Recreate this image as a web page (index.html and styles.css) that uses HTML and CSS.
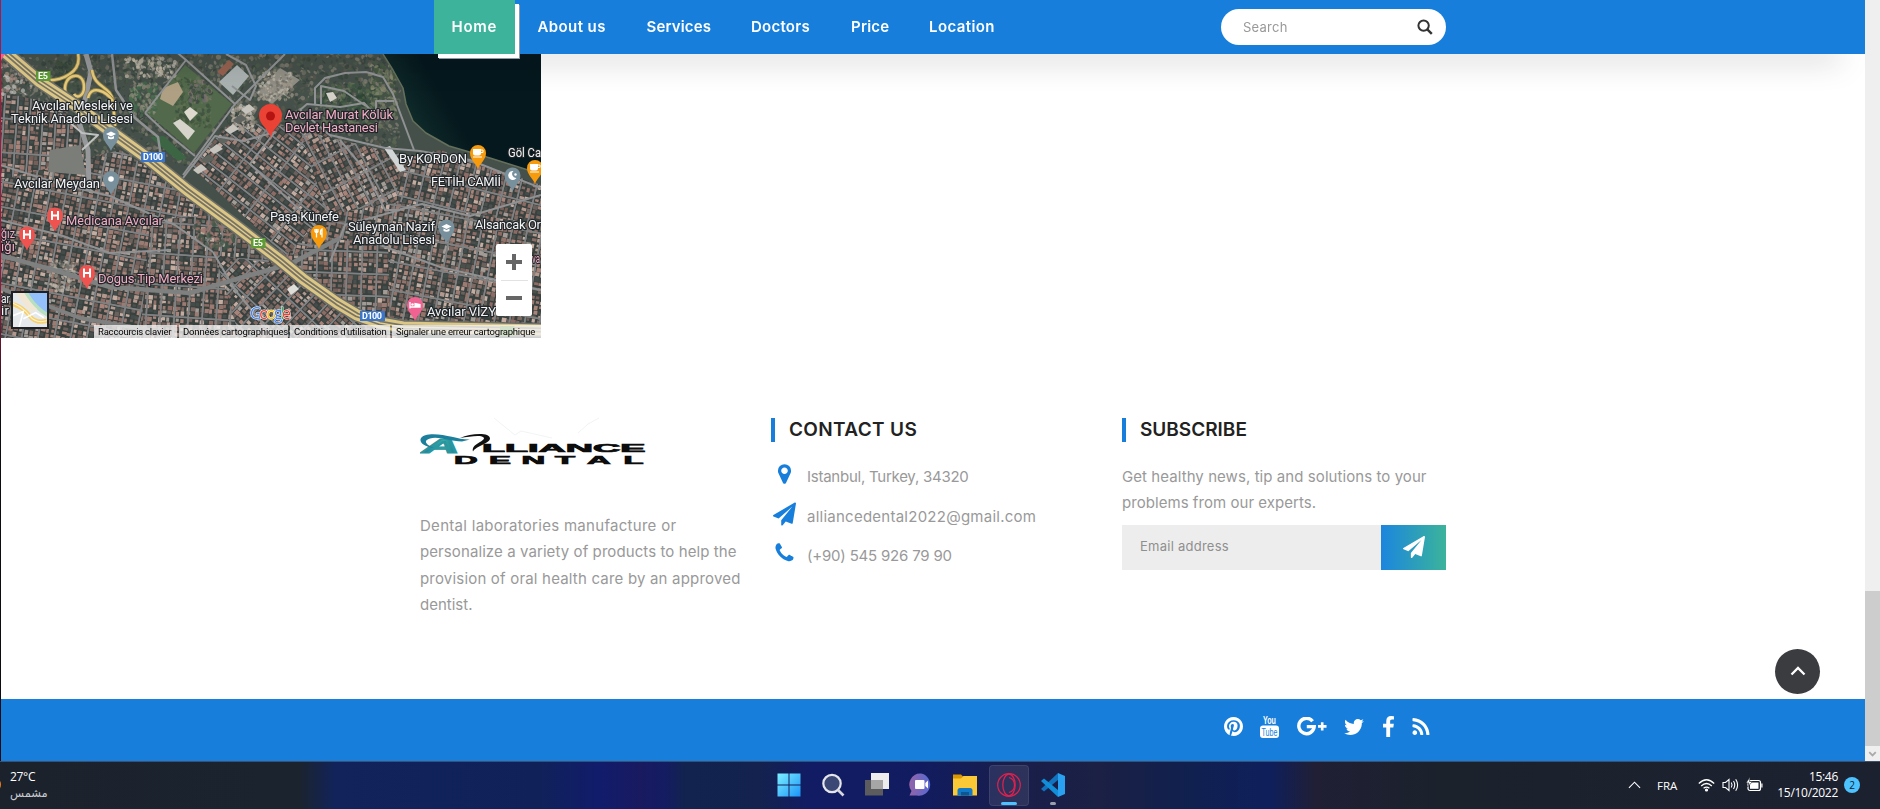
FILE: index.html
```html
<!DOCTYPE html>
<html lang="en">
<head>
<meta charset="utf-8">
<title>Alliance Dental</title>
<link rel="stylesheet" href="styles.css">
</head>
<body>
<div class="screen">
  <div class="browser">
    <div class="window-edge"></div>
    <div class="page">
      <header class="header">
        <nav class="nav">
          <a class="nav-link active n-home">Home</a>
          <a class="nav-link n-about">About us</a>
          <a class="nav-link n-services">Services</a>
          <a class="nav-link n-doctors">Doctors</a>
          <a class="nav-link n-price">Price</a>
          <a class="nav-link n-location">Location</a>
        </nav>
        <div class="search">
          <span class="search-label">Search</span>
          <svg class="search-icon" viewBox="0 0 16 16"><circle cx="6.6" cy="6.6" r="5.2" fill="none" stroke="#333" stroke-width="2"/><path d="M10.3 10.3 14.8 14.9" stroke="#333" stroke-width="2.4"/></svg>
        </div>
      </header>

      <section class="map">
        <canvas class="map-terrain" id="terrain" width="540" height="284"></canvas>
        <svg class="map-labels" viewBox="1 54 540 284">
          <defs>
            <path id="pin" d="M0 0C-2-6-8-9-8-16A8 8 0 0 1 8-16C8-9 2-6 0 0Z"/>
            <g id="cap"><path d="M-5-17 0-19.5 5-17 0-14.5Z" fill="#fff"/><path d="M-3-15V-12.5Q0-11 3-12.5V-15L0-13.4Z" fill="#fff"/></g>
            <g id="cup" fill="#fff"><path d="M-5-20H3V-15.500Q3-13.500 1-13.500H-3Q-5-13.500-5-15.500Z"/><path d="M3-19H5V-16.500H3" fill="none" stroke="#fff"/><path d="M-5-12.500H4V-11.500H-5Z"/></g>
            <g id="hosp" stroke="#fff" stroke-width="2"><path d="M-3-20.500V-11.500M3-20.500V-11.500M-3-16H3"/></g>
          </defs>
          <g class="badge">
            <rect x="36" y="71" width="14.500" height="10" fill="#5f9c35"/><text x="38" y="79.300" textLength="10">E5</text>
            <rect x="141" y="152" width="24" height="10" fill="#3a75c8"/><text x="143" y="160.300" textLength="20">D100</text>
            <rect x="251" y="238" width="14.500" height="10" fill="#5f9c35"/><text x="253" y="246.300" textLength="10">E5</text>
            <rect x="360" y="311" width="25" height="10" fill="#3a75c8"/><text x="362" y="319.300" textLength="20">D100</text>
            <rect x="500" y="326" width="14.500" height="10" fill="#5f9c35"/>
          </g>
          <g class="place">
            <text x="32" y="109.500" textLength="101">Avcılar Mesleki ve</text>
            <text x="11" y="122.500" textLength="122">Teknik Anadolu Lisesi</text>
            <text x="14" y="188" textLength="86">Avcılar Meydan</text>
            <text x="399" y="163" textLength="68">By KORDON</text>
            <text x="508" y="156.500" textLength="33" lengthAdjust="spacingAndGlyphs">Göl Ca</text>
            <text x="431" y="186" textLength="70">FETİH CAMİİ</text>
            <text x="270" y="221" textLength="69">Paşa Künefe</text>
            <text x="348" y="231" textLength="87">Süleyman Nazif</text>
            <text x="353" y="244" textLength="82">Anadolu Lisesi</text>
            <text x="475" y="229" textLength="66">Alsancak Or</text>
            <text x="427" y="316" textLength="69">Avcılar VİZY</text>
            <text x="1" y="303" textLength="9" lengthAdjust="spacingAndGlyphs">ar</text>
            <text x="1" y="315" textLength="8">ir</text>
          </g>
          <g class="place pink">
            <text x="285" y="119" textLength="108">Avcılar Murat Kölük</text>
            <text x="285" y="132" textLength="93">Devlet Hastanesi</text>
            <text x="66" y="225" textLength="97">Medicana Avcılar</text>
            <text x="98" y="283" textLength="105">Dogus Tip Merkezi</text>
            <text x="1" y="238" textLength="14" lengthAdjust="spacingAndGlyphs">ğız</text>
            <text x="1" y="251" textLength="14">ığı</text>
            <text x="532" y="263" textLength="8" lengthAdjust="spacingAndGlyphs">va</text>
          </g>
          <g transform="translate(1 61)"><use href="#pin" fill="#f06292"/></g>
          <g transform="translate(111 151)"><use href="#pin" fill="#78909c"/><use href="#cap"/></g>
          <g transform="translate(111 195)"><use href="#pin" fill="#78909c"/><circle cy="-16" r="2.800" fill="#fff"/></g>
          <g transform="translate(446.500 243.500)"><use href="#pin" fill="#78909c"/><use href="#cap"/></g>
          <g transform="translate(512.500 191.500)"><use href="#pin" fill="#78909c"/><path d="M1-20.500A4.500 4.500 0 1 0 4-13.500A4 4 0 0 1 1-20.500Z" fill="#fff"/><circle cx="3" cy="-17" r="1.200" fill="#fff"/></g>
          <g transform="translate(478 169)"><use href="#pin" fill="#f79a0b"/><use href="#cup"/></g>
          <g transform="translate(535 184)"><use href="#pin" fill="#f79a0b"/><use href="#cup"/></g>
          <g transform="translate(319 249)"><use href="#pin" fill="#f79a0b"/><path d="M-4-20V-17.500Q-2.500-15.500-1-17.500V-20M-2.500-20V-11.500M3-11.500V-20Q1-19 1.500-15H3" fill="none" stroke="#fff" stroke-width="1.300"/></g>
          <g transform="translate(55 231.500)"><use href="#pin" fill="#ef5350"/><use href="#hosp"/></g>
          <g transform="translate(27 250.500)"><use href="#pin" fill="#ef5350"/><use href="#hosp"/></g>
          <g transform="translate(87 289)"><use href="#pin" fill="#ef5350"/><use href="#hosp"/></g>
          <g transform="translate(415 321)"><use href="#pin" fill="#f06292"/><path d="M-5-19V-12.500M-5-14H5V-16.500L0-17.500V-14" stroke="#fff" fill="#fff" stroke-width="1.300"/><circle cx="-2.500" cy="-16.500" r="1.300" fill="#fff"/></g>
          <g transform="translate(270.500 138)"><path d="M0 0C-2-10-11.500-13-11.500-22.500A11.500 11.500 0 0 1 11.500-22.500C11.500-13 2-10 0 0Z" fill="#ea4335"/><circle cy="-22" r="4.500" fill="#b31412"/></g>
          <text class="google" x="250" y="319" textLength="41"><tspan fill="#4285f4">G</tspan><tspan fill="#ea4335">o</tspan><tspan fill="#fbbc04">o</tspan><tspan fill="#4285f4">g</tspan><tspan fill="#34a853">l</tspan><tspan fill="#ea4335">e</tspan></text>
        </svg>
        <svg class="map-thumb" viewBox="0 0 33 33"><rect width="33" height="33" fill="#e6e9ec"/><path d="M13 0H33V22Q24 17 20 10Z" fill="#94c0fb"/><path d="M10 0H15Q22 12 33 19V23Q20 16 10 0Z" fill="#b7dfc0"/><path d="M3 0H11Q17 10 24 16L17 18Q8 8 3 0Z" fill="#f1e7d3"/><path d="M0 11Q10 14 16 22T33 27" stroke="#f7cf6b" stroke-width="4" fill="none"/><path d="M0 10Q10 14 16 22T33 27" stroke="#fff4cf" fill="none"/><path d="M0 22 10 18 6 33M10 25 22 19 30 24" stroke="#fff" stroke-width="1.500" fill="none"/></svg>
        <div class="map-zoom"><span class="zoom-in"></span><span class="zoom-line"></span><span class="zoom-out"></span></div>
        <div class="map-legal">
          <span class="l1">Raccourcis clavier</span><span class="l2">Données cartographiques</span><span class="l3">Conditions d'utilisation</span><span class="l4">Signaler une erreur cartographique</span>
        </div>
      </section>

      <footer class="footer">
        <div class="about">
          <svg class="logo" viewBox="420 416 228 64">
            <defs><linearGradient id="teal"><stop offset="0" stop-color="#1c7f9c"/><stop offset=".6" stop-color="#36aaa4"/><stop offset="1" stop-color="#15758f"/></linearGradient></defs>
            <path d="M494 418 505 427 515 435 521 431 552 438M599 418 588 424 578 433" fill="none" stroke="#e9efef" stroke-width=".7"/>
            <text transform="translate(422 453.400) scale(2.600 1)" class="logo-a" fill="url(#teal)">A</text>
            <path d="M434 448C418 446 416 436 429 434.500C444 433 458 440 470 439.500L462 441.500C449 441.500 439 436 430 438.500C422 441 427 445 434 448Z" fill="#1c7f9c"/>
            <path d="M460 438C471 433 490 432 490 438.500C490 443 476 446 473 451.500C471 444 484 442 484 438C483 434.500 471 436 460 438Z" fill="#111"/>
            <text class="logo-word" transform="translate(482 452) scale(2.300 1)" textLength="71" lengthAdjust="spacingAndGlyphs">LLIANCE</text>
            <text class="logo-word" transform="translate(454 464) scale(2.850 1)" x="0 12.300 23.700 35.400 46.700 59.500">DENTAL</text>
          </svg>
          <p class="copy about-copy"><span class="a1">Dental laboratories manufacture or</span><br><span class="a2">personalize a variety of products to help the</span><br><span class="a3">provision of oral health care by an approved</span><br><span class="a4">dentist.</span></p>
        </div>
        <div class="contact">
          <h3 class="title t-contact">CONTACT US</h3>
          <div class="row"><svg class="fa" viewBox="0 0 1792 1792"><path d="M1152 640q0-106-75-181t-181-75-181 75-75 181 75 181 181 75 181-75 75-181zm256 0q0 109-33 179l-364 774q-16 33-47.500 52t-67.500 19-67.500-19-46.500-52l-365-774q-33-70-33-179 0-212 150-362t362-150 362 150 150 362z"/></svg><span class="copy c1">Istanbul, Turkey, 34320</span></div>
          <div class="row"><svg class="fa" viewBox="0 0 1792 1792"><path d="M1764 11q33 24 27 64l-256 1536q-5 29-32 45-14 8-31 8-11 0-24-5l-453-185-242 295q-18 23-49 23-13 0-22-4-19-7-30.500-23.500t-11.500-36.500v-349l864-1059-1069 925-395-162q-37-14-40-55-2-40 32-59l1664-960q15-9 32-9 20 0 36 11z"/></svg><span class="copy c2">alliancedental2022@gmail.com</span></div>
          <div class="row"><svg class="fa" viewBox="0 0 1792 1792"><path d="M1600 1240q0 27-10 70.500t-21 68.500q-21 50-122 106-94 51-186 51-27 0-53-3.500t-57.500-12.500-47-14.500-55.500-20.500-49-18q-98-35-175-83-127-79-264-216t-216-264q-48-77-83-175-3-9-18-49t-20.500-55.500-14.500-47-12.500-57.500-3.500-53q0-92 51-186 56-101 106-122 25-11 68.500-21t70.500-10q14 0 21 3 18 6 53 76 11 19 30 54t35 63.500 31 53.500q3 4 17.500 25t21.500 35.500 7 28.500q0 20-28.500 50t-62 55-62 53-28.500 46q0 9 5 22.500t8.500 20.500 14 24 11.500 19q76 137 174 235t235 174q2 1 19 11.500t24 14 20.500 8.500 22.500 5q18 0 46-28.500t53-62 55-62 50-28.500q14 0 28.500 7t35.500 21.500 25 17.500q25 15 53.500 31t63.500 35 54 30q70 35 76 53 3 7 3 21z"/></svg><span class="copy c3">(+90) 545 926 79 90</span></div>
        </div>
        <div class="subscribe">
          <h3 class="title t-sub">SUBSCRIBE</h3>
          <p class="copy sub-copy"><span class="s1">Get healthy news, tip and solutions to your</span><br><span class="s2">problems from our experts.</span></p>
          <div class="form"><span class="email">Email address</span><span class="send"><svg viewBox="0 0 1792 1792"><path d="M1764 11q33 24 27 64l-256 1536q-5 29-32 45-14 8-31 8-11 0-24-5l-453-185-242 295q-18 23-49 23-13 0-22-4-19-7-30.500-23.500t-11.500-36.500v-349l864-1059-1069 925-395-162q-37-14-40-55-2-40 32-59l1664-960q15-9 32-9 20 0 36 11z"/></svg></span></div>
        </div>
      </footer>

      <div class="social">
        <svg class="so-pin" viewBox="128 128 1536 1536"><path d="M1664 896q0 209-103 385.500t-279.500 279.500-385.500 103q-111 0-218-32 59-93 78-164 9-34 54-211 20 39 73 67.500t114 28.500q121 0 216-68.500t147-188.500 52-270q0-114-59.500-214t-172.500-163-255-63q-105 0-196 29t-154.500 77-109 110.500-67 129.500-21.500 134q0 104 40 183t117 111q30 12 38-20 2-7 8-31t8-30q6-23-11-43-51-61-51-151 0-151 104.500-259.500t273.500-108.500q151 0 235.500 82t84.500 213q0 170-68.500 289t-175.500 119q-61 0-98-43.500t-23-104.500q8-35 26.500-93.500t30-103 11.500-75.500q0-50-27-83t-77-33q-62 0-105 57t-43 142q0 73 25 122l-99 418q-17 70-13 177-206-91-333-281t-127-423q0-209 103-385.500t279.500-279.500 385.500-103 385.500 103 279.500 279.500 103 385.500z"/></svg>
        <svg class="so-yt" viewBox="0 0 19 23"><text x="3" y="9" textLength="13" lengthAdjust="spacingAndGlyphs" font-size="11.500" fill="#fff">You</text><rect y="10.500" width="19" height="12.500" rx="3"/><text x="1.500" y="21" textLength="16" lengthAdjust="spacingAndGlyphs" font-size="11" font-weight="normal" fill="#177fdb">Tube</text></svg>
        <svg class="so-gp" viewBox="0 0 30 19"><path d="M15.600 4.200A7.700 7.700 0 1 0 17.200 9.600H9.800" fill="none" stroke="#fff" stroke-width="3.400"/><path d="M25.200 5.300V13.500M21 9.400H29.500" stroke="#fff" stroke-width="2.600"/></svg>
        <svg class="so-tw" viewBox="108 256 1576 1280"><path d="M1684 408q-67 98-162 167 1 14 1 42 0 130-38 259.500t-115.500 248.500-184.500 210.500-258 146-323 54.500q-271 0-496-145 35 4 78 4 225 0 401-138-105-2-188-64.500t-114-159.500q33 5 61 5 43 0 85-11-112-23-185.500-111.500t-73.500-205.500v-4q68 38 146 41-66-44-105-115t-39-154q0-88 44-163 121 149 294.500 238.500t371.500 99.500q-8-38-8-74 0-134 94.500-228.500t228.500-94.500q140 0 236 102 109-21 205-78-37 115-142 178 93-10 186-50z"/></svg>
        <svg class="so-fb" viewBox="479 0 864 1664"><path d="M1343 12v264h-157q-86 0-116 36t-30 108v189h293l-39 296h-254v759h-306v-759h-255v-296h255v-218q0-186 104-288.500t277-102.500q147 0 228 12z"/></svg>
        <svg class="so-rss" viewBox="192 128 1408 1408"><path d="M576 1344q0 80-56 136t-136 56-136-56-56-136 56-136 136-56 136 56 56 136zm512 123q2 28-17 48-18 21-47 21h-135q-25 0-43-16.500t-20-41.500q-22-229-184.500-391.500t-391.500-184.500q-25-2-41.500-20t-16.500-43v-135q0-29 21-47 17-17 43-17h5q160 13 306 80.500t259 181.500q114 113 181.500 259t80.500 306zm512 2q2 27-18 47-18 20-46 20h-143q-26 0-44.500-17.500t-19.500-42.500q-12-215-101-408.500t-231.500-336-336-231.500-408.500-102q-25-1-42.500-19.500t-17.500-43.500v-143q0-28 20-46 18-18 44-18h3q262 13 501.500 120t425.500 294q187 186 294 425.500t120 501.500z"/></svg>
      </div>
      <div class="to-top"><svg viewBox="0 0 16 10"><path d="M1.500 8.500 8 2 14.500 8.500" fill="none" stroke="#fff" stroke-width="2.300"/></svg></div>
    </div>
    <div class="scrollbar"><div class="thumb"></div><svg viewBox="0 0 16 15"><path d="M4.500 6 8 9.500 11.500 6" fill="none" stroke="#aaa" stroke-width="2"/></svg></div>
  </div>

  <div class="taskbar">
    <div class="weather"><span class="temp">27°C</span><span class="cond" lang="ar">مشمس</span></div>
    <div class="apps">
      <span class="app"><svg viewBox="0 0 24 24"><defs><linearGradient id="win" x2="1" y2="1"><stop stop-color="#7df0ff"/><stop offset="1" stop-color="#1b94f8"/></linearGradient></defs><path d="M.5.500H11.500V11.500H.5ZM12.500.500H23.500V11.500H12.500ZM.5 12.500H11.500V23.500H.5ZM12.500 12.500H23.500V23.500H12.500Z" fill="url(#win)"/></svg></span>
      <span class="app"><svg viewBox="0 0 24 24"><circle cx="11" cy="10.500" r="8.700" fill="#3b4775" stroke="#e4e6ea" stroke-width="2.200"/><path d="M17 17 22.500 22.500" stroke="#d8d8dc" stroke-width="2.600"/></svg></span>
      <span class="app"><svg viewBox="0 0 24 24"><rect y="7" width="18" height="15.500" fill="#5c5c5e"/><rect x="6" y="0" width="18" height="16" fill="#ededed"/><rect x="6" y="7" width="12" height="9" fill="#a6a6a6"/></svg></span>
      <span class="app"><svg viewBox="0 0 24 24"><defs><linearGradient id="chat" x2="1"><stop stop-color="#9564a8"/><stop offset="1" stop-color="#5668d2"/></linearGradient></defs><path d="M12 .5A11 11 0 1 1 8 22.500H.5L2.500 18A11 11 0 0 1 12 .5Z" fill="url(#chat)"/><rect x="6" y="7" width="9.500" height="9" rx="1" fill="#fff"/><path d="M16.300 10 19 7.500V15.500L16.300 13Z" fill="#fff"/></svg></span>
      <span class="app"><svg viewBox="0 0 24 24"><path d="M0 1.500H8L10 3.500H24V10H0Z" fill="#dc9600"/><path d="M0 5.500H8L10.500 3H24V22.500H0Z" fill="#fcc936"/><path d="M4.500 22.500V17.500Q4.500 15 7 15H17Q19.500 15 19.500 17.500V22.500Z" fill="#1278c8"/><path d="M8 19H16V22.500H8Z" fill="#0b5693"/></svg></span>
      <span class="app current"><svg viewBox="0 0 24 24" fill="none" stroke="#e1204e" stroke-width="1.200"><circle cx="12" cy="12" r="11.300"/><ellipse cx="12" cy="12" rx="6.200" ry="10.800"/><path d="M12 4.500Q17.500 6 17.500 12T12 19.500"/></svg></span>
      <span class="app running"><svg viewBox="0 0 24 24"><path d="M17 0 24 3V21L17 24Z" fill="#2aa0f0"/><path d="M17 0V7L3 18.500 0 16Z" fill="#1173bd"/><path d="M0 8 3 5.500 17 17V24Z" fill="#128ed8"/></svg></span>
    </div>
    <div class="tray">
      <svg class="tr-up" viewBox="0 0 14 8"><path d="M1 7 7 1 13 7" fill="none" stroke="#fff" stroke-width="1.200"/></svg>
      <span class="lang">FRA</span>
      <svg class="tr-ico wifi" viewBox="0 0 17 14" fill="none" stroke="#fff" stroke-width="1.200"><path d="M.8 5.500Q8.500-2 16.200 5.500M3.200 8Q8.500 3 13.800 8M5.600 10.300Q8.500 7.800 11.400 10.300"/><circle cx="8.500" cy="12" r="1" fill="#fff"/></svg>
      <svg class="tr-ico vol" viewBox="0 0 17 14" fill="none" stroke="#fff" stroke-width="1.100"><path d="M1 4.500H3.500L7 1.500V12.500L3.500 9.500H1ZM9.300 4.500Q10.800 7 9.300 9.500M11.500 3Q14 7 11.500 11M13.700 1.300Q17.500 7 13.700 12.700"/></svg>
      <svg class="tr-ico bat" viewBox="0 0 17 14"><rect x="2" y="2.500" width="12.500" height="10" rx="2" fill="none" stroke="#fff" stroke-width="1.200"/><path d="M4 4.500H12.500V10.800H4Z" fill="#fff"/><path d="M15.300 5.500H16.500V9.500H15.300Z" fill="#fff"/><path d="M4-1 0 5H3L1.500 9 6.500 3.500H3.500Z" fill="#fff" stroke="#1b222c" stroke-width=".6"/></svg>
      <div class="clock"><span class="time">15:46</span><span class="date">15/10/2022</span></div>
      <span class="count">2</span>
    </div>
  </div>
</div>
<script src="map.js"></script>
</body>
</html>
```
FILE: styles.css
```css
* { box-sizing: border-box; }
body { margin: 0; font-family: "Inter", "Open Sans", sans-serif; background: #fff; }
.screen { width: 1880px; height: 809px; display: flex; flex-direction: column; overflow: hidden; }
.browser { height: 761px; display: flex; }
.window-edge { width: 1px; background: linear-gradient(#b5153c, #8e1a3c 40%, #0b0b10 55%); }
.page { width: 1864px; position: relative; display: flex; flex-direction: column; background: #fff; }

/* header */
.header { height: 54px; flex: none; background: #177fdb; padding: 0 419px 0 433px; display: flex; align-items: center; justify-content: space-between; position: relative; z-index: 3; box-shadow: 0 28px 30px -24px rgba(0, 0, 0, .42); }
.nav { display: flex; gap: 5px; height: 54px; }
.nav-link { padding: 0 0 0 17.5px; line-height: 53px; font-size: 15px; font-weight: 600; color: #fff; white-space: nowrap; }
.nav-link.active { background: #3cb39a; box-shadow: 4px 4px 0 #fff, 5px 5px 0 #8d9aa5; }
.n-home { width: 81px; letter-spacing: .75px; }
.n-about { width: 104px; letter-spacing: .4px; }
.n-services { width: 99.5px; letter-spacing: .15px; }
.n-doctors { width: 95px; letter-spacing: .25px; }
.n-price { width: 73px; letter-spacing: .2px; }
.n-location { width: 102px; letter-spacing: .4px; }
.search { width: 225px; height: 36px; border-radius: 18px; background: #fff; display: flex; align-items: center; justify-content: space-between; padding: 0 13px 0 22px; }
.search-label { font-size: 13px; color: #999; letter-spacing: .25px; margin-top: -1px; }
.search-icon { width: 16px; height: 16px; }

/* map */
.map { width: 540px; height: 284px; flex: none; position: relative; overflow: hidden; }
.map-terrain, .map-labels { position: absolute; left: 0; top: 0; width: 540px; height: 284px; }
.place { font: 13px Roboto, sans-serif; fill: #f4f4f4; stroke: #20262a; stroke-width: 2.4px; paint-order: stroke; stroke-linejoin: round; }
.pink { fill: #f3aec3; }
.badge { font: bold 9px Roboto, sans-serif; fill: #fff; }
.google { font: 500 16px "Open Sans", sans-serif; stroke: #fff; stroke-width: 1px; paint-order: stroke; }
.map-thumb { position: absolute; left: 10px; top: 237px; width: 38px; height: 38px; border: 2px solid #202124; }
.map-zoom { position: absolute; left: 495px; top: 190px; width: 36px; height: 72px; background: #fff; border-radius: 2px; display: flex; flex-direction: column; align-items: center; padding-top: 10px; }
.zoom-in { width: 16px; height: 16px; background: linear-gradient(#666, #666) center / 16px 4px no-repeat, linear-gradient(#666, #666) center / 4px 16px no-repeat; }
.zoom-line { width: 27px; height: 1px; background: #e2e2e2; margin-top: 10px; }
.zoom-out { width: 16px; height: 4px; background: #666; margin-top: 15px; }
.map-legal { position: absolute; right: 0; bottom: 0; width: 447px; height: 13px; display: flex; gap: 2px; font: 9.5px/13px Roboto, sans-serif; color: #000; white-space: nowrap; }
.map-legal span { background: rgba(245, 245, 245, .78); padding-left: 4px; }
.l1 { width: 83px; letter-spacing: -.2px; }
.l2 { width: 109px; letter-spacing: -.15px; }
.l3 { width: 100px; letter-spacing: -.15px; }
.l4 { width: 149px; letter-spacing: -.2px; }

/* footer */
.footer { height: 361px; flex: none; padding: 78px 0 0 419px; display: grid; grid-template-columns: 351px 351px 325px; }
.copy { font-size: 15px; font-weight: 400; line-height: 26.4px; color: #999; white-space: nowrap; margin: 0; }
.a1 { letter-spacing: .29px; } .a2 { letter-spacing: .09px; } .a3 { letter-spacing: .19px; } .a4 { letter-spacing: 0; }
.c1 { letter-spacing: -.25px; } .c2 { letter-spacing: .25px; } .c3 { letter-spacing: -.2px; }
.s1 { letter-spacing: .07px; } .s2 { letter-spacing: .05px; }
.logo { width: 228px; height: 64px; display: block; }
.logo-a { font: italic bold 20px "Liberation Sans", sans-serif; stroke: #2a96a0; stroke-width: 1.2px; }
.logo-word { font: bold 11.5px "Liberation Sans", sans-serif; fill: #0c0c0c; stroke: #0c0c0c; stroke-width: .7px; }
.about-copy { margin-top: 33px; }
.title { margin: 2px 0 22px; height: 24px; border-left: 4px solid #177fdb; padding-left: 14px; font-size: 19px; line-height: 23px; font-weight: 600; color: #222; white-space: nowrap; }
.t-contact { letter-spacing: .35px; }
.row { display: flex; align-items: flex-start; height: 39.5px; gap: 11px; }
.row .fa { width: 23px; height: 24px; margin: -2px 0 0 2px; fill: #177fdb; }
.form { margin-top: 8px; width: 324px; height: 45px; background: #ededed; display: flex; justify-content: space-between; }
.email { font-size: 13px; line-height: 43px; padding-left: 18px; color: #8f8f8f; letter-spacing: .25px; }
.send { width: 65px; display: flex; align-items: center; justify-content: center; background: linear-gradient(90deg, #1c86de, #3bb39b); }
.send svg { width: 22px; height: 22px; fill: #fff; }
.social { height: 62px; flex: none; background: #177fdb; padding: 0 435px 7px 0; display: flex; align-items: center; justify-content: flex-end; }
.social svg { fill: #fff; flex: none; }
.so-pin { width: 19px; height: 19px; }
.so-yt { width: 19px; height: 23px; margin-left: 17px; overflow: visible; font-family: "Liberation Sans", sans-serif; font-weight: bold; }
.so-gp { width: 30px; height: 19px; margin-left: 18px; }
.so-tw { width: 20px; height: 16px; margin-left: 17px; }
.so-fb { width: 11px; height: 21px; margin-left: 19px; }
.so-rss { width: 18px; height: 17px; margin-left: 18px; }
.to-top { position: absolute; right: 45px; bottom: 67px; width: 45px; height: 45px; border-radius: 50%; background: #3b3c40; display: flex; align-items: center; justify-content: center; }
.to-top svg { width: 16px; height: 10px; margin-bottom: 2px; }

.scrollbar { width: 15px; background: #efefef; padding-top: 591px; display: flex; flex-direction: column; }
.thumb { height: 155px; background: #cdcdcd; }
.scrollbar svg { width: 15px; height: 15px; }

/* taskbar */
.taskbar { height: 48px; border-top: 1px solid #40506a; display: grid; grid-template-columns: 768px 632px 480px; color: #fff; font-family: "Open Sans", sans-serif; background: linear-gradient(90deg, #1b222c 0, #1b232f 300px, #11235a 335px, #10215a 540px, #111c6b 600px, #191a60 640px, #141c62 665px, #12234f 685px, #13224f 760px, #111c64 810px, #111c60 920px, #191e4c 1010px, #1b2044 1100px, #10204f 1190px, #0f1f5c 1270px, #201f35 1315px, #1b222c 1440px, #1c2130 1880px); }
.weather { display: flex; flex-direction: column; padding: 6px 0 0 10px; position: relative; }
.weather::before { content: ""; position: absolute; left: -7px; top: 17px; width: 8px; height: 11px; border-radius: 50%; background: #ee7a1a; }
.temp { font-size: 12px; line-height: 17px; letter-spacing: -.3px; }
.cond { font: 11.5px/17px "DejaVu Sans", sans-serif; color: #c6c9ce; }
.apps { display: flex; gap: 4px; padding: 3px 0 0 1px; }
.app { width: 40px; height: 41px; border-radius: 4px; display: flex; justify-content: center; padding-top: 8px; position: relative; }
.app svg { width: 24px; height: 24px; }
.current { background: rgba(255, 255, 255, .09); border: 1px solid rgba(255, 255, 255, .08); padding-top: 7px; }
.current::after, .running::after { content: ""; position: absolute; bottom: 0; left: 11px; width: 16px; height: 3px; border-radius: 2px; background: #4cc2ff; }
.running::after { left: 17px; width: 6px; bottom: 1px; background: #9da0ac; }
.tray { display: flex; align-items: center; padding: 0 0 1px 228px; font-size: 12px; }
.tr-up { width: 13px; height: 8px; }
.lang { margin-left: 16px; width: 25px; font-size: 11.5px; }
.tr-ico { width: 17px; height: 14px; overflow: visible; }
.wifi { margin-left: 16px; } .vol { margin-left: 7px; } .bat { margin-left: 7px; }
.clock { width: 75px; text-align: right; display: flex; flex-direction: column; line-height: 16px; letter-spacing: -.3px; }
.count { margin-left: 6px; width: 16px; height: 16px; border-radius: 50%; background: #4cc2ff; color: #12202c; font-size: 10px; line-height: 16px; text-align: center; }
```
FILE: map.js
```js
// Draws the satellite terrain behind the map labels.
const ctx = document.getElementById('terrain').getContext('2d');
let seed = 11;
const rnd = () => (seed = (seed * 16807) % 2147483647) / 2147483647;
const pick = list => list[Math.floor(rnd() * list.length)];
ctx.translate(-1, -54);

function trace(points, close) {
  ctx.beginPath();
  points.forEach((p, i) => i ? ctx.lineTo(p[0], p[1]) : ctx.moveTo(p[0], p[1]));
  if (close) ctx.closePath();
}
function area(points, color) { trace(points, true); ctx.fillStyle = color; ctx.fill(); }
function road(points, width, color) {
  trace(points); ctx.lineJoin = 'round'; ctx.lineWidth = width; ctx.strokeStyle = color; ctx.stroke();
}
function speckle(x, y, w, h, count, colors, size) {
  ctx.globalAlpha = .7;
  for (let i = 0; i < count; i++) {
    ctx.fillStyle = pick(colors);
    ctx.beginPath();
    ctx.ellipse(x + rnd() * w, y + rnd() * h, .6 + rnd() * size, .6 + rnd() * size, rnd() * 3, 0, 7);
    ctx.fill();
  }
  ctx.globalAlpha = 1;
}
const roofs = ['#a78379', '#94736a', '#7f6963', '#b3988e', '#8c6c64', '#6a605c', '#4c504c', '#434c49', '#a39b95', '#c4aca1', '#9c7b72', '#755f59'];
// One neighbourhood: a rotated street grid filled with small roofs.
function district(points, degrees, blockW, blockH) {
  ctx.save();
  trace(points, true); ctx.clip();
  ctx.fillStyle = '#39413f'; ctx.fill();
  const cx = points.reduce((s, p) => s + p[0], 0) / points.length;
  const cy = points.reduce((s, p) => s + p[1], 0) / points.length;
  ctx.translate(cx, cy); ctx.rotate(degrees * Math.PI / 180);
  for (let bx = -330; bx < 330; bx += blockW) {
    for (let by = -330; by < 330; by += blockH) {
      for (let x = 1; x < blockW - 2; x += 5.2) {
        for (let y = 1; y < blockH - 2; y += 4.8) {
          ctx.fillStyle = pick(roofs);
          ctx.fillRect(bx + x + rnd(), by + y + rnd(), 2.6 + rnd() * 2.4, 2.4 + rnd() * 2.4);
        }
      }
      ctx.strokeStyle = '#7f8182'; ctx.lineWidth = 1.5;
      ctx.strokeRect(bx, by, blockW, blockH);
    }
  }
  ctx.restore();
}

area([[0, 54], [541, 54], [541, 338], [0, 338]], '#46504a');
speckle(0, 54, 400, 110, 2600, ['#36443a', '#4c5b49', '#606b59', '#77756a', '#33413a', '#868175', '#59584f'], 2);
district([[0, 92], [60, 105], [80, 130], [90, 200], [0, 200]], 4, 13, 34);
district([[0, 180], [120, 150], [185, 190], [280, 265], [400, 338], [0, 338]], 11, 16, 25);
district([[150, 220], [215, 215], [290, 280], [340, 338], [140, 338]], 4, 14, 31);
district([[215, 255], [285, 265], [380, 338], [240, 338]], 43, 16, 27);
district([[190, 165], [232, 122], [330, 130], [350, 215], [300, 270]], 38, 36, 12);
district([[300, 130], [340, 140], [425, 160], [415, 212], [330, 225]], 62, 30, 14);
district([[400, 160], [440, 150], [541, 185], [541, 240], [395, 220]], 14, 16, 25);
district([[325, 215], [400, 202], [541, 225], [541, 330], [400, 325], [280, 262]], 11, 15, 28);
district([[330, 238], [388, 242], [390, 322], [345, 304], [280, 260]], 2, 15, 22);

// park, buildings and open ground
area([[185, 65], [232, 104], [194, 153], [146, 112]], '#52694b');
speckle(175, 78, 35, 50, 200, ['#46593f', '#627456', '#3a4d3d'], 2);
speckle(190, 80, 22, 22, 60, ['#3a4440', '#6b6a6b', '#83786f'], 2);
area([[163, 88], [178, 82], [183, 92], [173, 106], [160, 99]], '#b0a083');
area([[173, 123], [180, 119], [195, 131], [188, 140]], '#d6d4cb');
area([[184, 112], [190, 107], [198, 113], [190, 121]], '#ddd9cf');
area([[150, 137], [164, 136], [187, 158], [178, 161]], '#3c6543');
area([[219, 82], [237, 65], [249, 76], [233, 95]], '#aab2b1');
area([[217, 72], [229, 60], [234, 64], [223, 76]], '#96614f');
area([[256, 93], [280, 68], [300, 80], [272, 104]], '#8f8d84');
speckle(258, 72, 34, 28, 160, ['#bdb9ad', '#6d6b64', '#a0988a'], 1.5);
speckle(232, 106, 22, 25, 110, ['#c4c1b8', '#8f8a7e', '#a89d8f'], 2);
for (let i = 0; i < 7; i++) area([[193 + i * 8, 170 - i * 10], [201 + i * 8, 164 - i * 10], [207 + i * 8, 169 - i * 10], [198 + i * 8, 174 - i * 10]], i % 2 ? '#60645e' : '#c6c4bc');
area([[50, 150], [80, 145], [86, 175], [48, 172]], '#7a7d78');
speckle(2, 60, 30, 36, 110, ['#bab9b4', '#7a7872', '#474d48', '#a98b80'], 2.2);
speckle(55, 60, 24, 30, 110, ['#33423a', '#415140'], 2.5);
speckle(125, 58, 50, 20, 110, ['#b5b1a5', '#7b7a6f', '#cabfad'], 2);
speckle(130, 82, 28, 34, 120, ['#40664a', '#4c6f50', '#8d8b79'], 2.2);
speckle(320, 84, 60, 42, 320, ['#3a5340', '#4e6549', '#2c4335', '#6c7660'], 2.5);
speckle(370, 65, 26, 50, 130, ['#737c62', '#8a8a70', '#455740'], 2.4);
speckle(50, 260, 25, 32, 90, ['#a39b90', '#c3baac', '#74716a'], 2);
speckle(195, 220, 40, 28, 120, ['#9d7770', '#3a4b42', '#445a4a'], 2.3);
area([[326, 93], [333, 92], [337, 98], [330, 102]], '#d3d1c8');
area([[384, 148], [390, 146], [406, 170], [400, 172]], '#d1d5d5');
area([[287, 289], [294, 284], [299, 289], [291, 295]], '#deddd7');

// sea
const sea = ctx.createLinearGradient(390, 120, 440, 90);
sea.addColorStop(0, '#1c3a2f'); sea.addColorStop(.45, '#0d2627'); sea.addColorStop(1, '#05181d');
area([[383, 54], [393, 70], [403, 88], [406, 104], [413, 121], [426, 133], [449, 146], [490, 158], [541, 174], [541, 54]], sea);
road([[383, 54], [393, 70], [403, 88], [406, 104], [413, 121], [426, 133], [449, 146], [490, 158], [541, 174]], 1.5, '#65705b');

// streets
const grey = '#8f9192';
[
  [[315, 105], [315, 88], [325, 78], [345, 73], [366, 72], [383, 77], [393, 94], [402, 118], [414, 150]],
  [[300, 110], [307, 104], [340, 107], [364, 103], [378, 118]], [[321, 104], [321, 86], [344, 91], [366, 106]],
  [[376, 115], [376, 101], [394, 101]],
  [[145, 113], [186, 60], [174, 50]], [[186, 60], [235, 104]], [[183, 175], [235, 104], [285, 54]],
  [[232, 86], [250, 100], [256, 86], [246, 65], [226, 54]],
  [[145, 113], [163, 130], [195, 156]], [[183, 178], [215, 136], [243, 141], [275, 132]],
  [[275, 132], [250, 164], [300, 210], [328, 240]], [[300, 110], [330, 135], [385, 148], [420, 151], [470, 160], [541, 188]],
  [[340, 140], [365, 170], [385, 210], [398, 210], [422, 204], [470, 216], [541, 195]],
  [[0, 220], [60, 235], [110, 253], [170, 250]], [[0, 165], [60, 184], [110, 196], [175, 225], [213, 252]],
  [[213, 252], [235, 290], [275, 338]], [[400, 210], [345, 225], [330, 262]], [[380, 245], [440, 267], [541, 290]]
].forEach(points => road(points, 2, grey));
road([[0, 255], [60, 272], [110, 287], [190, 293], [240, 278], [290, 264], [340, 238]], 4.5, '#7f8181');
road([[0, 288], [80, 318], [160, 332]], 4, '#7f8181');
road([[86, 54], [91, 72], [85, 100], [79, 122], [88, 150], [89, 190]], 5, '#969899');
road([[112, 54], [116, 90], [135, 118], [158, 137], [163, 170]], 2.5, grey);
road([[60, 114], [82, 133], [98, 135], [82, 150]], 2, '#bfc2c0');

// interchange ramps
function curve(d, width, color) { ctx.strokeStyle = color; ctx.lineWidth = width; ctx.stroke(new Path2D(d)); }
['M78 54C82 72 62 82 43 80', 'M66 94C60 75 84 68 84 87C84 96 77 99 74 94', 'M92 70C94 88 111 86 113 101L115 126', 'M88 98C91 84 106 91 113 101'].forEach(d => {
  curve(d, 4, '#8f7f4c'); curve(d, 2.4, '#e6ca78');
});

// motorway
const motorway = [[-2, 46], [40, 82], [78, 107], [110, 131], [150, 160], [187, 190], [233, 224], [280, 260], [303, 279], [337, 303], [357, 315], [380, 323], [403, 327], [541, 330]];
road(motorway, 14, '#6d6e68');
road(motorway, 11, '#dcc684');
road(motorway, 5, '#777467');
road(motorway, 1.5, '#e4cd88');
```
